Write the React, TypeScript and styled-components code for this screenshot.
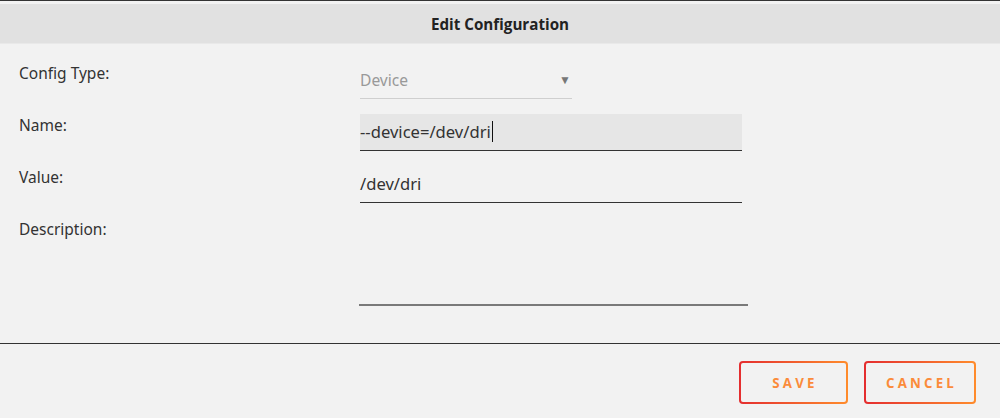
import React from "react";
import styled, { createGlobalStyle } from "styled-components";

const GlobalStyle = createGlobalStyle`
  html, body { margin: 0; padding: 0; background: #f2f2f2; }
  body { font-family: "Noto Sans", "Open Sans", sans-serif; color: #333; }
  * { box-sizing: border-box; }
`;

const Dialog = styled.div`
  width: 1000px;
  height: 418px;
  background: #f2f2f2;
  border-top: 1px solid #333;
  padding-top: 3px;
  display: flex;
  flex-direction: column;
`;

const Header = styled.div`
  height: 40px;
  flex: none;
  background: #e1e1e1;
  border-bottom: 1px solid #e9e9e9;
  display: flex;
  align-items: center;
  justify-content: center;
  font-family: "Open Sans", sans-serif;
  font-weight: 700;
  font-size: 15.2px;
  color: #222;
`;

const Form = styled.div`
  display: grid;
  grid-template-columns: 341px 1fr;
  align-content: start;
  row-gap: 15px;
  padding: 18px 0 0 19px;
  height: 300px;
  flex: none;
  border-bottom: 1px solid #333;
`;

const Label = styled.div`
  font-size: 15.5px;
  line-height: 22px;
  color: #333;
`;

const Field = styled.div<{ $width: number; $filled?: boolean; $line?: string }>`
  width: ${(p) => p.$width}px;
  height: 37px;
  display: flex;
  align-items: center;
  background: ${(p) => (p.$filled ? "#e6e6e6" : "transparent")};
  border-bottom: 1px solid ${(p) => p.$line || "#333"};
  font-size: 16.6px;
  color: #333;
  padding-bottom: 1px;
`;

const SelectText = styled.span`
  flex: 1;
  color: #999;
  font-size: 15.6px;
`;

const Arrow = styled.span`
  color: #777;
  font-size: 12px;
  margin-right: 1px;
`;

const Caret = styled.span`
  display: inline-block;
  width: 1.5px;
  height: 21px;
  background: #111;
  margin-left: 1px;
`;

const TextArea = styled.div`
  width: 389px;
  height: 88px;
  margin-left: -1px;
  border-bottom: 2px solid #7a7a7a;
`;

const Footer = styled.div`
  display: flex;
  justify-content: flex-end;
  gap: 16px;
  padding: 17px 24px 0 0;
`;

const Button = styled.button<{ $width: number }>`
  width: ${(p) => p.$width}px;
  height: 43px;
  border: 2px solid transparent;
  border-radius: 4px;
  background: linear-gradient(#f2f2f2, #f2f2f2) padding-box,
    linear-gradient(90deg, #e42d2f, #ff8c2c) border-box;
  color: #fb8b3a;
  font-family: "Open Sans", sans-serif;
  font-weight: 700;
  font-size: 13.3px;
  letter-spacing: 3.2px;
  padding: 0 0 0 3px;
  cursor: pointer;
`;

export default function App() {
  return (
    <>
      <GlobalStyle />
      <Dialog>
        <Header>Edit Configuration</Header>
        <Form>
          <Label>Config Type:</Label>
          <Field $width={212} $line="#cfcfcf">
            <SelectText>Device</SelectText>
            <Arrow>▼</Arrow>
          </Field>
          <Label>Name:</Label>
          <Field $width={382} $filled>
            --device=/dev/dri
            <Caret />
          </Field>
          <Label>Value:</Label>
          <Field $width={382}>/dev/dri</Field>
          <Label>Description:</Label>
          <TextArea />
        </Form>
        <Footer>
          <Button $width={109}>SAVE</Button>
          <Button $width={112}>CANCEL</Button>
        </Footer>
      </Dialog>
    </>
  );
}
